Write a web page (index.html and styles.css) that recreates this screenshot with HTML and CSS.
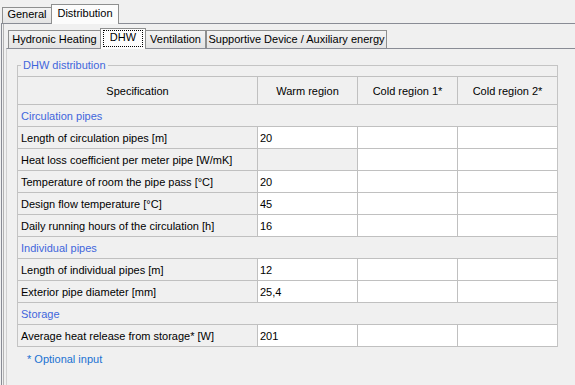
FILE: index.html
```html
<!DOCTYPE html>
<html>
<head>
<meta charset="utf-8">
<link rel="stylesheet" href="styles.css">
</head>
<body>
<div class="tabstrip outer-strip">
  <div class="tab t-general">General</div>
  <div class="tab sel t-dist">Distribution</div>
</div>
<div class="outer-panel">
  <div class="outer-inner">
    <div class="tabstrip inner-strip">
      <div class="tab t-hyd">Hydronic Heating</div>
      <div class="tab sel t-dhw"><span class="focus">DHW</span></div>
      <div class="tab t-vent">Ventilation</div>
      <div class="tab t-sup">Supportive Device / Auxiliary energy</div>
    </div>
    <div class="inner-panel">
      <div class="group">
        <span class="legend">DHW distribution</span>
        <div class="grid">
          <div class="hd">Specification</div>
          <div class="hd">Warm region</div>
          <div class="hd">Cold region 1*</div>
          <div class="hd">Cold region 2*</div>

          <div class="sec">Circulation pipes</div>

          <div class="lbl">Length of circulation pipes [m]</div>
          <div class="val">20</div><div class="val"></div><div class="val"></div>

          <div class="lbl">Heat loss coefficient per meter pipe [W/mK]</div>
          <div class="val off"></div><div class="val"></div><div class="val"></div>

          <div class="lbl">Temperature of room the pipe pass [°C]</div>
          <div class="val">20</div><div class="val"></div><div class="val"></div>

          <div class="lbl">Design flow temperature [°C]</div>
          <div class="val">45</div><div class="val"></div><div class="val"></div>

          <div class="lbl">Daily running hours of the circulation [h]</div>
          <div class="val">16</div><div class="val"></div><div class="val"></div>

          <div class="sec">Individual pipes</div>

          <div class="lbl">Length of individual pipes [m]</div>
          <div class="val">12</div><div class="val"></div><div class="val"></div>

          <div class="lbl">Exterior pipe diameter [mm]</div>
          <div class="val">25,4</div><div class="val"></div><div class="val"></div>

          <div class="sec">Storage</div>

          <div class="lbl">Average heat release from storage* [W]</div>
          <div class="val">201</div><div class="val"></div><div class="val"></div>
        </div>
      </div>
      <div class="note">* Optional input</div>
    </div>
  </div>
</div>
</body>
</html>
```
FILE: styles.css
```css
* { box-sizing: border-box; }
html, body {
  margin: 0;
  padding: 0;
  background: #f0f0f0;
  font-family: "Liberation Sans", Arial, sans-serif;
  font-size: 11px;
  color: #000;
  overflow: hidden;
}
.tabstrip {
  display: flex;
  align-items: flex-end;
}
.tab {
  border: 1px solid #8e8f8f;
  border-bottom: none;
  background: linear-gradient(#f3f3f3, #e4e4e4);
  text-align: center;
  line-height: 13px;
  white-space: nowrap;
}
.tab.sel {
  background: #fcfcfc;
  margin-bottom: -1px;
  position: relative;
  z-index: 2;
}
.outer-strip {
  height: 23px;
  padding-left: 2px;
}
.t-general { width: 50px; height: 16px; padding-top: 0; }
.t-dist { width: 68px; height: 20px; margin-left: -1px; padding-top: 2px; }

.outer-panel {
  border-top: 1px solid #898c95;
  border-left: 1px solid #898c95;
  margin-left: 1px;
  height: 362px;
}
.outer-inner {
  margin-left: 1px;
  border-left: 1px solid #b4b4b4;
  padding-left: 2px;
  height: 100%;
}
.inner-strip {
  height: 24px;
  padding-left: 2px;
}
.t-hyd { width: 93px; height: 18px; padding-top: 2px; }
.t-dhw { width: 46px; height: 21px; margin-left: -1px; padding: 1px 1px 0 1px; }
.t-vent { width: 61px; height: 18px; margin-left: -1px; padding-top: 2px; }
.t-sup { width: 181px; height: 18px; padding-top: 2px; }
.focus {
  display: block;
  height: 17px;
  margin: 0 1px 0 1px;
  border: 1px dotted #000;
  line-height: 13px;
}

.inner-panel {
  border-top: 1px solid #898c95;
  border-left: 1px solid #d0d0d0;
  padding: 16px 0 0 10px;
  height: 337px;
}
.group {
  position: relative;
  width: 541px;
  border: 1px solid #c4c4c4;
  border-bottom: none;
  padding-top: 10px;
}
.legend {
  position: absolute;
  top: -7px;
  left: 3px;
  padding: 0 2px;
  background: #f0f0f0;
  line-height: 13px;
  color: #3f66dc;
}
.grid {
  display: grid;
  grid-template-columns: 239px 99px 99px 99px;
  grid-template-rows: 27px;
  grid-auto-rows: 21px;
  gap: 1px;
  background: #c0c0c0;
  border-top: 1px solid #c0c0c0;
  border-bottom: 1px solid #c0c0c0;
}
.grid > div {
  display: flex;
  align-items: center;
  white-space: nowrap;
  overflow: hidden;
}
.hd {
  background: #f0f0f0;
  justify-content: center;
}
.sec {
  grid-column: 1 / 5;
  background: #f0f0f0;
  padding-left: 3px;
  color: #3f66dc;
}
.lbl {
  background: #f0f0f0;
  padding-left: 3px;
}
.val {
  background: #fff;
  padding-left: 2px;
}
.val.off { background: #f0f0f0; }
.note {
  margin: 6px 0 0 10px;
  line-height: 13px;
  color: #1a72d2;
}
```
